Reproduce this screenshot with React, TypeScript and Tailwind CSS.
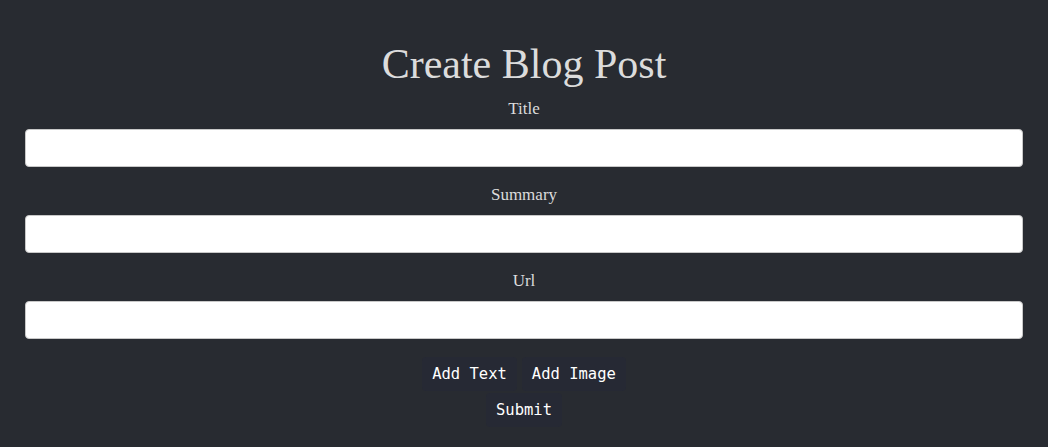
export default function App() {
  const fields = ['Title', 'Summary', 'Url']

  return (
    <div className="min-h-[447px] bg-[#282b31] px-[25px] pt-[36px] text-[#dcdcdc] font-['Liberation_Serif',serif]">
      <h1 className="text-center text-[42px] leading-[56px]">Create Blog Post</h1>

      <form className="flex flex-col items-center" onSubmit={(e) => e.preventDefault()}>
        {fields.map((label, i) => (
          <div key={label} className={`flex w-full flex-col items-center ${i === 0 ? 'mt-[5px]' : 'mt-[16px]'}`}>
            <label className="text-[17px] leading-[24px]">{label}</label>
            <input
              type="text"
              className="mt-[8px] h-[38px] w-full rounded-[4px] border border-[#c8c8c8] bg-white px-2 text-black outline-none"
            />
          </div>
        ))}

        <div className="mt-[18px] flex gap-[5px] font-['DejaVu_Sans_Mono',monospace] text-[15.5px] text-white">
          <button type="button" className="rounded-[4px] bg-[#262934] px-[10px] py-[5px] leading-[24px]">
            Add Text
          </button>
          <button type="button" className="rounded-[4px] bg-[#262934] px-[10px] py-[5px] leading-[24px]">
            Add Image
          </button>
        </div>
        <button
          type="submit"
          className="mt-[2px] rounded-[4px] bg-[#262934] px-[10px] py-[5px] font-['DejaVu_Sans_Mono',monospace] text-[15.5px] leading-[24px] text-white"
        >
          Submit
        </button>
      </form>
    </div>
  )
}
